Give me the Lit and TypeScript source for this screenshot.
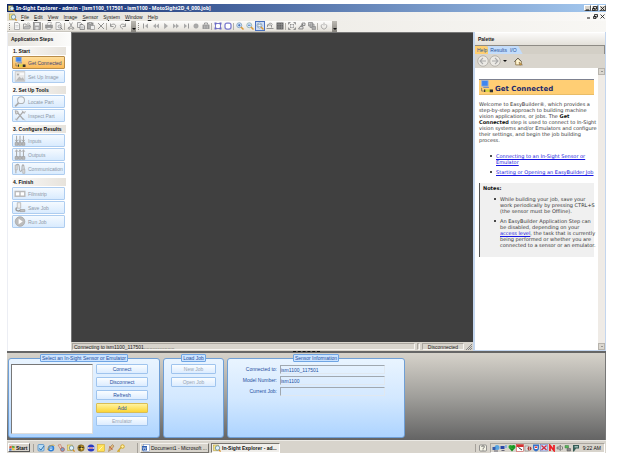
import { LitElement, html, svg, css, TemplateResult, SVGTemplateResult } from "lit";
import { customElement } from "lit/decorators.js";
import { classMap } from "lit/directives/class-map.js";

const glyphs: Record<string, SVGTemplateResult> = {
  explorer: svg`<rect x="1" y="2" width="10" height="11" fill="#f4e58a" stroke="#b59b2c"/><circle cx="9" cy="8" r="4.5" fill="#dff2fb" stroke="#5c7f94" stroke-width="1.5"/><path d="M12 11l3 4" stroke="#d98a17" stroke-width="2.5"/>`,
  newdoc: svg`<path d="M3 1h7l3 3v11H3z" fill="#f6f6f6" stroke="#9a9a9a" stroke-width="1.5"/><path d="M5 7h6M5 10h6" stroke="#b5b5b5"/>`,
  open: svg`<path d="M1 14V4h5l1 2h6v2" fill="none" stroke="#888" stroke-width="1.5"/><path d="M1 14l3-6h12l-3 6z" fill="#bbb" stroke="#888"/><path d="M8 3c3-2 5-1 6 2" fill="none" stroke="#888"/>`,
  save: svg`<rect x="1" y="1" width="14" height="14" fill="#aaa" stroke="#888" stroke-width="1.5"/><rect x="4" y="2" width="8" height="5" fill="#eee"/><rect x="5" y="10" width="6" height="5" fill="#ddd"/>`,
  print: svg`<path d="M4 6l2-5h7l-2 5" fill="#fff" stroke="#888"/><rect x="1" y="6" width="14" height="6" fill="#999" stroke="#888"/><rect x="4" y="11" width="8" height="4" fill="#eee" stroke="#888"/>`,
  preview: svg`<path d="M2 1h7l3 3v11H2z" fill="#f4f4f4" stroke="#999" stroke-width="1.5"/><circle cx="9" cy="9" r="3" fill="#ddd" stroke="#777"/><path d="M11 11l4 4" stroke="#777" stroke-width="2"/>`,
  cut: svg`<path d="M5 1l5 9M11 1L6 10" stroke="#888" stroke-width="1.5"/><circle cx="4.500" cy="12.500" r="2" fill="none" stroke="#777" stroke-width="1.5"/><circle cx="11.500" cy="12.500" r="2" fill="none" stroke="#777" stroke-width="1.5"/>`,
  copy: svg`<path d="M1 1h6l2 2v8H1z" fill="#eee" stroke="#888" stroke-width="1.5"/><path d="M6 5h6l3 3v7H6z" fill="#e6e6e6" stroke="#777" stroke-width="1.5"/><path d="M8 10h5M8 12h5" stroke="#999"/>`,
  paste: svg`<rect x="1" y="2" width="11" height="12" fill="#a5a5a5" stroke="#777" stroke-width="1.5"/><rect x="4" y="1" width="5" height="3" fill="#ddd" stroke="#777"/><path d="M7 7h8v8H7z" fill="#eee" stroke="#777"/>`,
  del: svg`<path d="M2 2l12 12M14 2L2 14" stroke="#888" stroke-width="1.8"/>`,
  undo: svg`<path d="M3 3v6h6M3 8c3-6 12-4 10 1-1 3-3 4-5 5" fill="none" stroke="#888" stroke-width="1.7"/>`,
  redo: svg`<path d="M13 3v6H7M13 8C10 2 1 4 3 9c1 3 3 4 5 5" fill="none" stroke="#888" stroke-width="1.7"/>`,
  first: svg`<path d="M3 3v10" stroke="#999" stroke-width="2"/><path d="M12 3v10L6 8z" fill="#aaa"/>`,
  rew: svg`<path d="M8 3v10L2 8zM14 3v10L8 8z" fill="#aaa"/>`,
  play: svg`<path d="M5 3v10l6-5z" fill="#aaa" stroke="#999"/>`,
  fwd: svg`<path d="M2 3v10l6-5zM8 3v10l6-5z" fill="#aaa"/>`,
  last: svg`<path d="M13 3v10" stroke="#999" stroke-width="2"/><path d="M4 3v10l6-5z" fill="#aaa"/>`,
  rec: svg`<circle cx="8" cy="8" r="4.500" fill="#aaa" stroke="#999"/>`,
  bag: svg`<rect x="1" y="5" width="14" height="9" rx="1" fill="#999"/><path d="M5 5V2h6v3" fill="none" stroke="#999" stroke-width="2"/><path d="M5 7v6M8 7v6M11 7v6" stroke="#ccc"/>`,
  region: svg`<rect x="3" y="3" width="10" height="10" fill="#fff" stroke="#7a7acb" stroke-width="2"/><path d="M1 1h4v4H1zM11 1h4v4h-4zM1 11h4v4H1zM11 11h4v4h-4z" fill="#6a6ac4"/>`,
  regionRound: svg`<rect x="2" y="2" width="12" height="12" rx="4" fill="#fff" stroke="#7a7ace" stroke-width="2.500"/>`,
  zoomIn: svg`<circle cx="6.500" cy="6.500" r="5" fill="#d4e8fa" stroke="#7798b8" stroke-width="1.500"/><path d="M4 6.500h5M6.500 4v5" stroke="#2b55ae" stroke-width="1.500"/><path d="M10 10l5 5" stroke="#dc9a35" stroke-width="3"/>`,
  zoomOut: svg`<circle cx="6.500" cy="6.500" r="5" fill="#d4e8fa" stroke="#8aa" stroke-width="1.500"/><path d="M4 6.500h5" stroke="#2b55ae" stroke-width="1.500"/><path d="M10 10l5 5" stroke="#dc9a35" stroke-width="3"/>`,
  zoomFit: svg`<circle cx="7" cy="7" r="5" fill="#f2f8ff" stroke="#7798b8" stroke-width="1.500"/><path d="M4 5h6v4H4z" fill="none" stroke="#789"/><path d="M10 10l5 5" stroke="#dc9a35" stroke-width="3"/>`,
  rotate: svg`<path d="M1 13h14M3 10V6h8v5M4 6c1-4 7-5 9-1" fill="none" stroke="#888" stroke-width="1.700"/>`,
  grid: svg`<rect x="1" y="1" width="14" height="14" fill="#666"/><path d="M1 5h14M1 10h14M6 1v14M11 1v14" stroke="#999"/>`,
  expand: svg`<path d="M1 5V1h4M11 1h4v4M15 11v4h-4M5 15H1v-4M3 3l10 10M13 3L3 13" fill="none" stroke="#777" stroke-width="1.500"/><rect x="5" y="5" width="6" height="6" fill="#eee" stroke="#888"/>`,
  send: svg`<path d="M1 14h9v-5H4zM8 2h6v5H8z" fill="#ddd" stroke="#777" stroke-width="1.500"/><path d="M5 8l5-4" stroke="#777" stroke-width="2"/>`,
  windows: svg`<path d="M1 1h8v7H1zM4 4h8v7H4z" fill="#ccc" stroke="#888" stroke-width="1.500"/><path d="M8 9h7v6H8z" fill="#aaa" stroke="#777"/>`,
  power: svg`<path d="M5 4a5.500 5.500 0 1 0 6 0M8 1v6" fill="none" stroke="#999" stroke-width="1.500"/>`,
  connect: svg`<path d="M2 0h8v7H2z" fill="#3f86ee" stroke="#9bb4e0"/><path d="M4 8.500h7" stroke="#7c8fb8" stroke-width="1.500"/><path d="M2 9v4h3" fill="none" stroke="#555" stroke-width=".8"/><path d="M5 12.500h10" stroke="#d6d43a" stroke-width="3"/><path d="M5 11h1.500v3H5zM12 11h4v3.500h-4z" fill="#333"/>`,
  setup: svg`<rect x="1" y="1" width="14" height="14" fill="#e9e9e9" stroke="#c3c3c3"/><path d="M2 14l5-6 3 3 2-2 3 5z" fill="#b9b9b9"/><circle cx="5" cy="5" r="1.500" fill="#aaa"/><path d="M8 3h6v3H8z" fill="#f9f9f9"/>`,
  locate: svg`<circle cx="9.500" cy="6" r="5" fill="#f0f5fa" stroke="#b0b4b8" stroke-width="1.500"/><path d="M6 10l-5 5" stroke="#aaa" stroke-width="2.500"/>`,
  tools: svg`<path d="M3 2l10 12M13 2L3 14" stroke="#aaa" stroke-width="2"/><path d="M1 1l4 1v3l-3 1zM11 1l3 4 2-3M1 13l3 2M12 12l3 3" fill="#ddd" stroke="#a8a8a8" stroke-width="1.300"/>`,
  pins: svg`<path d="M3 1v9M8 1v9M13 1v9" stroke="#aaa" stroke-width="1.500"/><path d="M1 7l2 3 2-3M6 7l2 3 2-3M11 7l2 3 2-3" fill="none" stroke="#999"/><path d="M1 11h4v4H1zM6 11h4v4H6zM11 11h4v4h-4z" fill="#bbb" stroke="#999"/>`,
  pinsUp: svg`<path d="M3 2v9M8 2v9M13 2v9" stroke="#aaa" stroke-width="1.500"/><path d="M1 4l2-3 2 3M6 4l2-3 2 3M11 4l2-3 2 3" fill="none" stroke="#999"/><path d="M1 11h4v4H1zM6 11h4v4H6zM11 11h4v4h-4z" fill="#bbb" stroke="#999"/>`,
  comm: svg`<path d="M2 7v8M2 7c0-7 5-7 5 0s4 7 4 0 3-5 3 1v4" fill="none" stroke="#aaa" stroke-width="1.500"/><path d="M1 3h3v7H1zM12 9h3v6h-3z" fill="#ddd" stroke="#aaa"/>`,
  film: svg`<rect x="0" y="4" width="16" height="9" fill="#b9b9b9"/><path d="M2 6h5v5H2zM9 6h5v5H9z" fill="#fff"/>`,
  saveJob: svg`<path d="M4 1h5v8H4z" fill="#eee" stroke="#aaa"/><path d="M3 8c-3 5 3 6 5 4" fill="none" stroke="#999" stroke-width="2"/><path d="M8 11h7v3H8z" fill="#c4c4c4" stroke="#999"/>`,
  run: svg`<circle cx="8" cy="8" r="7" fill="#bcbcbc" stroke="#a2a2a2"/><path d="M6 4v8l6-4z" fill="#fff"/>`,
  back: svg`<circle cx="8" cy="8" r="7" fill="#eceae5" stroke="#a9a69f"/><path d="M8 4L4 8l4 4M4 8h8" fill="none" stroke="#aaa" stroke-width="1.500"/>`,
  ahead: svg`<circle cx="8" cy="8" r="7" fill="#eceae5" stroke="#a9a69f"/><path d="M8 4l4 4-4 4M12 8H4" fill="none" stroke="#aaa" stroke-width="1.500"/>`,
  home: svg`<path d="M1 8l6-6 6 6v6H3V8z" fill="#fff4cf" stroke="#8b7345" stroke-width="1.500"/><path d="M9 9l6 5h-5z" fill="#ecac32" stroke="#765"/><path d="M1 8l6-6 6 6" fill="none" stroke="#555" stroke-width="1.500"/>`,
  flag: svg`<path d="M1 4l6-2v6L1 9z" fill="#e2502a"/><path d="M8 2l7 1v5l-7-1z" fill="#59a83a"/><path d="M1 10l6-1v5l-6 1z" fill="#3873d3"/><path d="M8 8l7 1v5l-7-1z" fill="#f2bf28"/>`,
  desktop: svg`<rect x="2" y="1" width="12" height="13" rx="2" fill="#b7dcf4" stroke="#4888c4" stroke-width="1.500"/><path d="M4 9l4 3 6-8" stroke="#2f6fae" stroke-width="2" fill="none"/>`,
  ie: svg`<circle cx="8" cy="8.500" r="5" fill="#d8edff" stroke="#2e7fd8" stroke-width="3"/><path d="M4 8h8" stroke="#2e7fd8" stroke-width="2"/><path d="M1 12C3 5 10 0 15 3" fill="none" stroke="#e1a72a" stroke-width="1.700"/>`,
  phone: svg`<path d="M2 2l5-1 3 7-3 2z" fill="#e9d3c2" stroke="#b75b49"/><circle cx="11" cy="11" r="4" fill="#7b9fc4" stroke="#b83a2c"/>`,
  gold: svg`<circle cx="8" cy="8" r="6.500" fill="#b68d27" stroke="#5b4916"/><path d="M3 7h10M6 3v10" stroke="#2c2818" stroke-width="2"/><circle cx="9" cy="9" r="2" fill="#f5df74"/>`,
  blueball: svg`<circle cx="8" cy="8" r="7" fill="#263ac4"/><path d="M1 8h14" stroke="#eee" stroke-width="3"/><path d="M4 8h8" stroke="#c52b40" stroke-width="1.500"/>`,
  note: svg`<rect x="1" y="1" width="14" height="14" fill="#ffe157" stroke="#d0a11b"/><path d="M4 12l7-7" stroke="#fff4ba" stroke-width="2"/>`,
  pen: svg`<path d="M3 15L5 7l6-6 3 3-5 7z" fill="#dcb87c" stroke="#8f6840"/><path d="M4 5l7 6" stroke="#c65434" stroke-width="2"/>`,
  key: svg`<circle cx="11" cy="5" r="3.500" fill="#fff0a1" stroke="#d1a72c" stroke-width="2"/><path d="M8 7l-6 7h4" stroke="#d1a72c" stroke-width="2.500" fill="none"/>`,
  word: svg`<rect x="3" y="1" width="12" height="14" fill="#fff" stroke="#6c8cc4"/><rect x="0" y="4" width="10" height="9" fill="#2c5db0"/><path d="M2 6l1 5 2-4 2 4 1-5" fill="none" stroke="#fff"/>`,
  help: svg`<rect x="1" y="2" width="14" height="12" rx="2" fill="#f4f3e6" stroke="#777" stroke-width="1.500"/><path d="M5 6c0-3 6-3 6 0 0 2-3 1-3 4M8 11v2" fill="none" stroke="#555" stroke-width="1.500"/>`,
  net: svg`<circle cx="10" cy="7" r="5" fill="#5aa6e2"/><path d="M1 6h6v6H1z" fill="#345aa8"/><path d="M4 14h8" stroke="#667" stroke-width="2"/>`,
  monitors: svg`<path d="M1 4h8v6H1z" fill="#2946a5"/><path d="M10 2h4v6h-4z" fill="#8fb2de"/><path d="M3 13h6" stroke="#667" stroke-width="2"/>`,
  tree: svg`<circle cx="5" cy="6" r="4" fill="#27a62d"/><circle cx="11" cy="6" r="4" fill="#149b20"/><path d="M3 9h10l-5 6z" fill="#138b1d"/>`,
  redcard: svg`<rect x="1" y="1" width="14" height="14" fill="#fff" stroke="#c73535"/><path d="M1 1h14v5H1z" fill="#d33131"/><path d="M5 7l7 5" stroke="#333" stroke-width="2"/>`,
  alarm: svg`<path d="M2 4h7v10H2z" fill="#ddd" stroke="#777"/><circle cx="11" cy="9" r="4" fill="#a9403b"/><path d="M11 5v7" stroke="#fff"/>`,
  shield: svg`<path d="M2 1h12v7c0 4-3 6-6 7-3-1-6-3-6-7z" fill="#3571c8"/><path d="M5 4h6v6H5z" fill="#fff"/><path d="M6 5h4v3H6z" fill="#d33"/>`,
  redx: svg`<rect x="1" y="1" width="14" height="13" fill="#c7dafa" stroke="#617bc4"/><path d="M3 3l10 9M13 3L3 12" stroke="#d02c3c" stroke-width="2.500"/>`,
  zigzag: svg`<path d="M4 14V3l8 10V2" fill="none" stroke="#ed1c24" stroke-width="3.500"/>`,
  speaker: svg`<path d="M2 6h3l4-4v11l-4-3H2z" fill="#aaa" stroke="#555"/><path d="M11 4c3 2 3 6 0 8" fill="none" stroke="#666" stroke-width="1.500"/>`,
  usb: svg`<path d="M2 3h7v5H2z" fill="#59b65a" stroke="#3a7741"/><path d="M6 9h7v5H6z" fill="#888" stroke="#555"/>`,
  plug: svg`<path d="M2 2h12v7H8l-4 6H2z" fill="#355c55"/><path d="M5 4h7v3H5z" fill="#9cb9b4"/>`,
};

const icon = (name: string): TemplateResult =>
  html`<svg class="icon" viewBox="0 0 16 16" aria-hidden="true">${glyphs[name]}</svg>`;

const reset = css`
  * { box-sizing: border-box; }
  button, input, select {
    font: inherit; color: inherit; margin: 0; padding: 0; border: 0;
    background: none; border-radius: 0; outline: 0;
  }
  .icon { width: 8px; height: 8px; display: block; flex: none; }
`;

@customElement("tool-strip")
class ToolStrip extends LitElement {
  static groups = [
    [["newdoc", "open", "save"], ["print", "preview"], ["cut", "copy", "paste", "del"], ["undo", "redo"]],
    [["first", "rew", "play", "fwd", "last", "rec", "bag"], ["region", "regionRound"],
     ["zoomIn", "zoomOut", "zoomFit", "rotate", "grid"], ["expand", "send", "windows"], ["power"]],
  ];
  static styles = [reset, css`
    :host { display: flex; height: 11px; background: linear-gradient(90deg, #e6e3dc, #f8f7f4); }
    .bar { display: flex; align-items: center; padding-left: 2px; border-bottom: 1px solid #c9c6be;
      background: linear-gradient(#fdfdfc, #e4e1da); }
    .handle { width: 1px; height: 7px; margin-right: 2px; border-left: 1px dotted #8d8a84; }
    button { width: 10px; height: 10px; display: grid; place-items: center; }
    .sel { border: 1px solid #4b73c0; background: #cfdcf3; }
    .sep { width: 2px; height: 7px; border-left: 1px solid #b3b0a9; }
    .more { width: 5px; height: 11px; margin-left: 3px; background: linear-gradient(#bdbab3, #85827c);
      display: flex; align-items: flex-end; justify-content: center; color: #111; }
    .more::after { content: ""; border: 2px solid transparent; border-top-color: #111; border-bottom: 0; margin-bottom: 2px; }
  `];
  render() {
    return ToolStrip.groups.map((bar) => html`<div class="bar" role="toolbar"><span class="handle"></span>
      ${bar.map((g, i) => html`${i ? html`<span class="sep"></span>` : ""}${g.map((n) =>
        html`<button aria-label=${n} class=${classMap({ sel: n === "zoomFit" })}>${icon(n)}</button>`)}`)}
      <button class="more" aria-label="More buttons"></button></div>`);
  }
}

@customElement("step-list")
class StepList extends LitElement {
  static steps: [string, [string, string][]][] = [
    ["1. Start", [["connect", "Get Connected"], ["setup", "Set Up Image"]]],
    ["2. Set Up Tools", [["locate", "Locate Part"], ["tools", "Inspect Part"]]],
    ["3. Configure Results", [["pins", "Inputs"], ["pinsUp", "Outputs"], ["comm", "Communication"]]],
    ["4. Finish", [["film", "Filmstrip"], ["saveJob", "Save Job"], ["run", "Run Job"]]],
  ];
  static styles = [reset, css`
    :host { display: block; width: 64px; flex: none; background: #fff; border-left: 1px solid #eceef4; }
    h2, h3 { margin: 0; font-size: 5px; font-weight: bold; color: #111; white-space: nowrap; }
    h2 { line-height: 13px; padding-left: 3px; margin: 1px 0; background: linear-gradient(90deg, #e6e3dd, #fcfcfb); }
    section { display: flex; flex-direction: column; gap: 1px; padding: 0 5px 3px 4px; }
    h3 { line-height: 8px; padding-left: 1px; background: linear-gradient(90deg, #fbfaf9, #e7e3dc); }
    button { display: flex; align-items: center; gap: 2px; height: 13px; padding-left: 1px; margin-right: 1px; border: 1px solid #aecdf0;
      border-radius: 1px; background: linear-gradient(#f5faff, #d9ebfe); color: #8e99a8; white-space: nowrap; }
    .icon { width: 12px; height: 11px; }
    .on { background: linear-gradient(#ffdf9c, #fbb956); border-color: #b98d4a; color: #3a3f78; }
  `];
  render() {
    return html`<h2>Application Steps</h2>${StepList.steps.map(([t, items]) => html`<section><h3>${t}</h3>
      ${items.map(([g, label]) => html`<button ?disabled=${g !== "connect"} class=${classMap({ on: g === "connect" })}>${icon(g)}${label}</button>`)}
    </section>`)}`;
  }
}

@customElement("help-palette")
class HelpPalette extends LitElement {
  static styles = [reset, css`
    :host { display: flex; flex-direction: column; width: 133px; flex: none; background: #fff; border: solid #c4d6ee; border-width: 0 1px 1px 2px; }
    h2 { margin: 1px 0 0; padding-left: 3px; font-size: 5px; line-height: 12px; background: linear-gradient(#fbfaf9, #e3e0d9); }
    .tabs { display: flex; height: 9px; background: #d3cfc6; border: solid #8e8b85; border-width: 1px 1px 0 0; }
    .tabs button { padding: 0 1px 0 2px; background: #c3dcfa; color: #28549b; }
    .tabs .on { background: #ffcf70; border-radius: 0 3px 0 0; }
    .tabs .end { padding-right: 6px; clip-path: polygon(0 0, 70% 0, 100% 100%, 0 100%); }
    .nav { display: flex; align-items: center; height: 14px; padding-left: 2px; background: #d9d5cd; }
    .nav button { width: 12px; height: 12px; }
    .nav .icon { width: 12px; height: 12px; }
    .nav .drop { width: 8px; display: grid; place-items: center; }
    .drop::after { content: ""; border: 2px solid transparent; border-top-color: #111; border-bottom: 0; }
    .nav .home { width: 10px; height: 10px; margin-left: 5px; }
    .nav .home .icon { width: 9px; height: 9px; }
    .view { flex: 1; display: flex; min-height: 0; }
    .doc { flex: 1; min-width: 0; padding: 11px 4px 0; font-family: "DejaVu Sans", sans-serif; font-size: 5px; line-height: 6px; color: #333; white-space: nowrap; }
    h1 { display: flex; align-items: flex-end; gap: 2px; height: 16px; margin: 0 0 6px; padding-left: 1px; border-top: 1px solid #7d8190; border-bottom: 1px solid #e9bd68;
      background: #ffce74; font: bold 7px/9px "DejaVu Sans", sans-serif; color: #1c2a6c; }
    h1 .icon { width: 13px; height: 14px; }
    p { margin: 0; }
    a { color: #1717e0; }
    b { color: #111; }
    ul { margin: 10px 0 8px; padding: 0 0 0 17px; display: flex; flex-direction: column; gap: 4px; list-style: none; }
    li { display: flex; gap: 4px; margin-left: -6px; }
    li::before { content: ""; width: 2px; height: 2px; margin-top: 2px; border-radius: 1px; background: #111; flex: none; }
    aside { border-left: 1px solid #555; background: #f0f0f0; padding: 2px 0 9px 3px; }
    aside ul { margin: 5px 0 0; gap: 4px; }
    .scroll { width: 7px; flex: none; display: flex; flex-direction: column; justify-content: space-between; background: #efebe6; }
    .scroll button { height: 7px; display: grid; place-items: center; background: #dbd7cf; border: 1px solid #b7b3ac; }
    .up::after { content: ""; border: 1px solid transparent; border-bottom-color: #555; border-top: 0; }
    .down::after { content: ""; border: 1px solid transparent; border-top-color: #555; border-bottom: 0; }
  `];
  render() {
    return html`<h2>Palette</h2>
      <div class="tabs" role="tablist"><button role="tab" class="on">Help</button><button role="tab">Results</button><button role="tab" class="end">I/O</button></div>
      <div class="nav"><button aria-label="Back">${icon("back")}</button><button aria-label="Forward">${icon("ahead")}</button>
        <button class="drop" aria-label="History"></button><button class="home" aria-label="Home">${icon("home")}</button></div>
      <div class="view"><article class="doc">
        <h1>${icon("connect")}Get Connected</h1>
        <p>Welcome to EasyBuilder®, which provides a<br>step-by-step approach to building machine<br>vision applications, or jobs. The <b>Get<br>Connected</b> step is used to connect to In-Sight<br>vision systems and/or Emulators and configure<br>their settings, and begin the job building<br>process.</p>
        <ul><li><a href="#sensor">Connecting to an In-Sight Sensor or<br>Emulator</a></li><li><a href="#job">Starting or Opening an EasyBuilder Job</a></li></ul>
        <aside><b>Notes:</b><ul>
          <li><span>While building your job, save your<br>work periodically by pressing CTRL+S<br>(the sensor must be Offline).</span></li>
          <li><span>An EasyBuilder Application Step can<br>be disabled, depending on your<br><a href="#access">access level</a>, the task that is currently<br>being performed or whether you are<br>connected to a sensor or an emulator.</span></li>
        </ul></aside>
      </article><div class="scroll"><button class="up" aria-label="Scroll up"></button><button class="down" aria-label="Scroll down"></button></div></div>`;
  }
}

@customElement("sensor-dock")
class SensorDock extends LitElement {
  static styles = [reset, css`
    :host { display: flex; gap: 3px; height: 87px; padding: 1px 1px 2px; border-right: 1px solid #777; background: linear-gradient(#d6d2ca, #a09f9b 50%, #646464); color: #1f4fa0; }
    fieldset { margin: 0; min-width: 0; padding: 2px; border: 1px solid #6f9fd6; border-radius: 3px; background: linear-gradient(#e9f4ff, #d3e8ff 50%, #add4ff); }
    legend { margin: 0 auto; padding: 0 1px; height: 8px; line-height: 6px; border: 1px solid #6fa5e4; border-radius: 1px; background: #cbe3ff; white-space: nowrap; }
    .select { width: 152px; }
    .load { width: 61px; }
    .info { width: 178px; }
    .row { display: flex; gap: 3px; }
    .list { width: 82px; height: 70px; border: 1px solid #777; border-color: #777 #ddd #ddd #777; background: #fff; }
    .col { display: flex; flex-direction: column; gap: 3px; width: 52px; }
    .load .col { width: 45px; margin: 0 auto; }
    button { height: 10px; border: 1px solid #9fc4ee; border-radius: 1px; background: linear-gradient(#fafdff, #dcecff); line-height: 6px; }
    .on { background: linear-gradient(#fff3a0, #fcd535); border-color: #d9bd55; }
    button:disabled { color: #9aa5b4; }
    .fields { display: grid; grid-template-columns: 47px 105px; gap: 2px 3px; margin-top: 1px; }
    label { text-align: right; line-height: 9px; white-space: nowrap; }
    input { height: 9px; min-width: 0; border: 1px solid #a0a8b0; border-right-color: #e0e8f0; border-bottom-color: #e0e8f0; }
  `];
  render() {
    const field = (id: string, label: string, value: string) =>
      html`<label for=${id}>${label}</label><input id=${id} readonly .value=${value}>`;
    return html`<fieldset class="select"><legend>Select an In-Sight Sensor or Emulator</legend><div class="row">
        <select class="list" size="4" aria-label="Sensors and emulators"></select>
        <div class="col"><button>Connect</button><button>Disconnect</button><button>Refresh</button><button class="on">Add</button><button disabled>Emulator</button></div></div></fieldset>
      <fieldset class="load"><legend>Load Job</legend><div class="col"><button disabled>New Job</button><button disabled>Open Job</button></div></fieldset>
      <fieldset class="info"><legend>Sensor Information</legend><div class="fields">
        ${field("to", "Connected to:", "ism1100_117501")}${field("model", "Model Number:", "ism1100")}${field("job", "Current Job:", "")}</div></fieldset>`;
  }
}

@customElement("task-bar")
class TaskBar extends LitElement {
  static quick = ["desktop", "ie", "phone", "explorer", "gold", "blueball", "note", "pen", "key"];
  static tray = ["net", "monitors", "tree", "redcard", "alarm", "shield", "redx", "zigzag", "speaker", "usb", "plug"];
  static styles = [reset, css`
    :host { display: flex; align-items: center; height: 13px; padding: 1px 1px 0; background: #d8d4cc; border-top: 1px solid #eceae5; color: #111; white-space: nowrap; }
    button { display: flex; align-items: center; }
    .start { width: 22px; height: 9px; gap: 1px; border: 1px solid #fff; border-right-color: #555; border-bottom-color: #555; font-weight: bold; }
    .start .icon { width: 6px; height: 6px; }
    .quick { display: flex; gap: 2px; margin-left: 3px; padding-left: 3px; border-left: 1px solid #a5a19a; }
    .tasks { display: flex; gap: 2px; margin-left: 12px; padding-left: 2px; border-left: 1px solid #a5a19a; }
    .tasks button { width: 69px; height: 10px; gap: 1px; padding-left: 1px; border: 1px solid #f4f2ee; border-right-color: #77746e; border-bottom-color: #77746e; }
    .tasks .on { background: #f0eeea; font-weight: bold; border-color: #77746e #fff #fff #77746e; }
    .help { margin-left: auto; padding: 0 3px; border-left: 1px solid #a5a19a; }
    .tray { display: flex; align-items: center; height: 10px; border: 1px solid #aaa69f; border-right-color: #fff; border-bottom-color: #fff; padding: 0 3px 0 1px; }
    time { margin-left: 3px; }
  `];
  render() {
    return html`<button class="start">${icon("flag")}Start</button>
      <div class="quick">${TaskBar.quick.map((n) => html`<button aria-label=${n}>${icon(n)}</button>`)}</div>
      <div class="tasks"><button>${icon("word")}Document1 - Microsoft ...</button><button class="on">${icon("explorer")}In-Sight Explorer - ad...</button></div>
      <button class="help" aria-label="Help">${icon("help")}</button>
      <div class="tray">${TaskBar.tray.map((n) => icon(n))}<time>9:22 AM</time></div>`;
  }
}

@customElement("app-root")
class AppRoot extends LitElement {
  static menus = ["File", "Edit", "View", "Image", "Sensor", "System", "Window", "Help"];
  static styles = [reset, css`
    :host { display: flex; flex-direction: column; box-sizing: border-box; min-height: 100vh; padding: 4px 13px 4px 7px; background: #fff;
      font: 5px/6px "Liberation Sans", Arial, sans-serif; color: #222; }
    header { display: flex; align-items: center; height: 8px; gap: 1px; padding-left: 1px; background: linear-gradient(90deg, #0a246a, #a6caf0); color: #fff; font-family: "Noto Sans", sans-serif; font-weight: bold; white-space: nowrap; }
    header .icon { width: 7px; height: 7px; }
    .wins { display: flex; margin-left: auto; }
    header .wins button { width: 7px; height: 6px; background: #d8d4cc; border: 1px solid #fff; border-right-color: #555; border-bottom-color: #555; }
    .wins button { display: grid; place-items: center; width: 7px; height: 7px; }
    .wins svg { width: 5px; height: 5px; display: block; }
    header .wins button:last-child { margin-left: 1px; }
    nav { display: flex; align-items: center; height: 9px; padding-left: 2px; background: linear-gradient(90deg, #e4e1da, #faf9f7); }
    .menus { display: flex; gap: 5px; padding-left: 4px; }
    u { text-decoration-thickness: 1px; }
    main { display: flex; flex: 1; }
    .center { flex: 1; display: flex; flex-direction: column; background: #d8d4cc; }
    .canvas { flex: 1; background: #404040; border: solid #777; border-width: 1px 0 0 1px; }
    .status { display: flex; height: 9px; padding: 1px; gap: 2px; line-height: 6px; }
    .status span { border: 1px solid #aaa69f; border-right-color: #f6f4f0; border-bottom-color: #f6f4f0; padding: 0 1px; }
    .status .msg { flex: 1; }
    .status .blank { width: 3px; padding: 0; }
    .status .state { width: 42px; text-align: center; }
    .status svg { width: 6px; height: 7px; }
    .split { display: flex; justify-content: center; height: 2px; background: #666; }
    .split i { width: 27px; border-top: 1px dashed #111; }
  `];
  private wins() {
    return html`<div class="wins">
      <button aria-label="Minimize"><svg viewBox="0 0 5 5"><path d="M1 4h3" stroke="#111"/></svg></button>
      <button aria-label="Restore"><svg viewBox="0 0 5 5"><path d="M1.500 .500h3v2.500h-3zM.500 2.500h2.500v2H.500z" fill="#ddd" stroke="#111" stroke-width=".8"/></svg></button>
      <button aria-label="Close"><svg viewBox="0 0 5 5"><path d="M.500 .500l4 4M4.500 .500l-4 4" stroke="#111" stroke-width=".8"/></svg></button></div>`;
  }
  render() {
    return html`<header>${icon("explorer")}<span>In-Sight Explorer - admin - [ism1100_117501 - ism1100 - MotoSight2D_4_000.job]</span>${this.wins()}</header>
      <nav>${icon("explorer")}<div class="menus">${AppRoot.menus.map((m) => m === "Image"
        ? html`<button>I<u>m</u>age</button>` : m === "System" ? html`<button>S<u>y</u>stem</button>`
        : html`<button><u>${m[0]}</u>${m.slice(1)}</button>`)}</div>${this.wins()}</nav>
      <tool-strip></tool-strip>
      <main><step-list></step-list>
        <div class="center"><div class="canvas"></div>
          <div class="status"><span class="msg">Connecting to ism1100_117501......................</span><span class="blank"></span><span class="state">Disconnected</span>
            <svg viewBox="0 0 6 7"><path d="M6 1L0 7M6 3L2 7M6 5L4 7" stroke="#888"/></svg></div></div>
        <help-palette></help-palette></main>
      <div class="split"><i></i></div>
      <sensor-dock></sensor-dock>
      <task-bar></task-bar>`;
  }
}
